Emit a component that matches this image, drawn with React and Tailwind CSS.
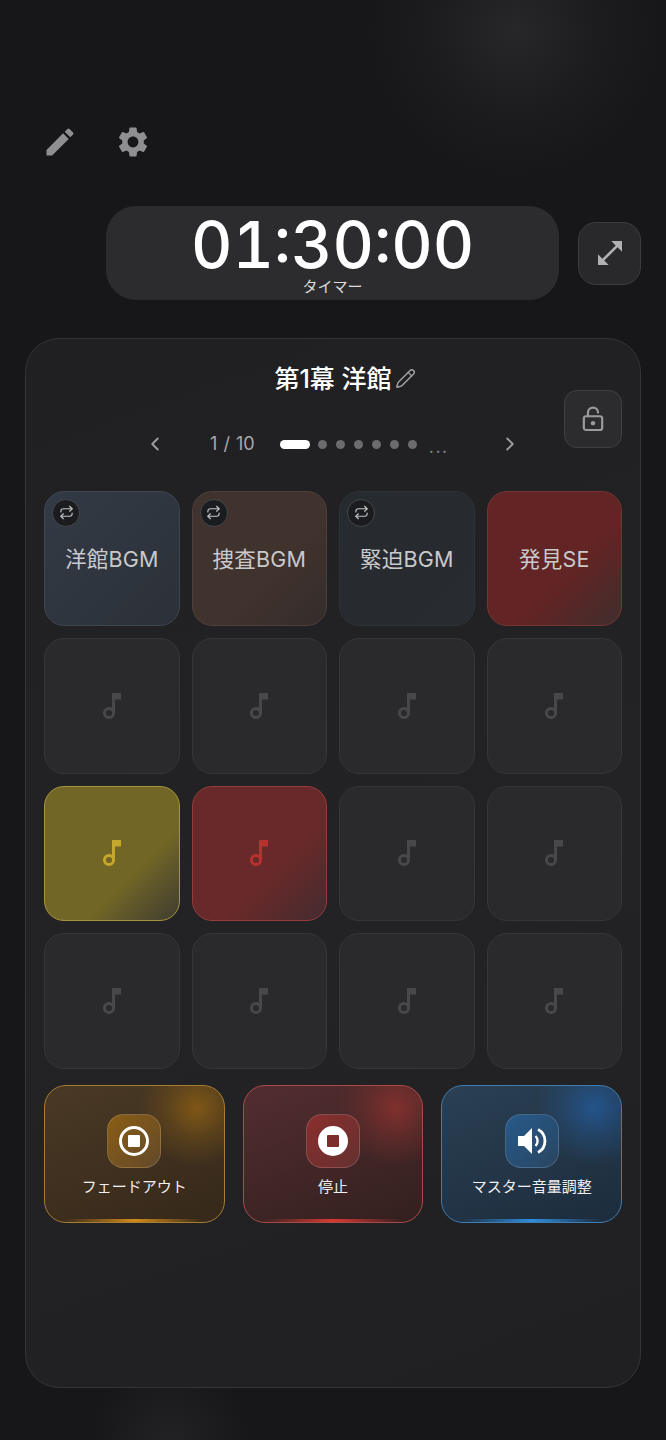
import { ChevronLeft, ChevronRight, Pencil, Repeat } from 'lucide-react'
import { MdEdit, MdOpenInFull, MdSettings } from 'react-icons/md'

const FONT = "font-['Inter','Noto_Sans_CJK_JP',sans-serif]"

const tiles = [
  { label: '洋館BGM', loop: true, box: 'border-[#40464f] bg-[linear-gradient(135deg,#323a45,#2c3138)]' },
  { label: '捜査BGM', loop: true, box: 'border-[#4e3f3b] bg-[linear-gradient(135deg,#40322d_60%,#342d2b)]' },
  { label: '緊迫BGM', loop: true, box: 'border-[#2d3237] bg-[linear-gradient(135deg,#262b30,#282b2f)]' },
  { label: '発見SE', box: 'border-[#773434] bg-[linear-gradient(135deg,#622424_62%,#3f2e2e)]' },
  {}, {}, {}, {},
  { box: 'border-[#a3953f] bg-[linear-gradient(135deg,#726626_65%,#3f3c30_100%)]', note: 'text-[#c4a72d]' },
  { box: 'border-[#963c3c] bg-[linear-gradient(135deg,#672929_65%,#432c30_100%)]', note: 'text-[#b9302f]' },
  {}, {},
  {}, {}, {}, {},
]

function NoteIcon({ className }) {
  return (
    <svg width="20" height="28" viewBox="0 0 20 28" className={className}>
      <circle cx="7" cy="21" r="4.6" fill="none" stroke="currentColor" strokeWidth="3" />
      <path d="M10 21V1h9v6.5h-6V21z" fill="currentColor" />
    </svg>
  )
}

function LockIcon() {
  return (
    <svg width="22" height="26" viewBox="0 0 24 28" fill="none" stroke="#9a9a9c" strokeWidth="2.4">
      <rect x="2" y="11" width="20" height="15" rx="2.5" />
      <path d="M6.5 11V7a5.5 5.5 0 0 1 11 0" strokeLinecap="round" />
      <circle cx="12" cy="18.5" r="2.4" fill="#9a9a9c" stroke="none" />
    </svg>
  )
}

function FadeIcon() {
  return (
    <svg width="32" height="32" viewBox="0 0 32 32">
      <circle cx="16" cy="16" r="13.5" fill="none" stroke="white" strokeWidth="3" />
      <rect x="10" y="10" width="12" height="12" rx="1" fill="white" />
    </svg>
  )
}

function StopIcon() {
  return (
    <svg width="32" height="32" viewBox="0 0 32 32">
      <circle cx="16" cy="16" r="15" fill="white" />
      <rect x="10" y="10" width="12" height="12" rx="1" fill="#7c2c2b" />
    </svg>
  )
}

function VolumeIcon() {
  return (
    <svg width="30" height="28" viewBox="0 0 30 28">
      <path d="M1 9h6l8-8v26l-8-8H1z" fill="white" />
      <path d="M18.5 9a7 7 0 0 1 0 10" fill="none" stroke="white" strokeWidth="2.4" />
      <path d="M21 2.5a13 13 0 0 1 0 23" fill="none" stroke="white" strokeWidth="2.8" />
    </svg>
  )
}

function Tile({ label, loop, box, note }) {
  return (
    <div className={`relative flex aspect-square items-center justify-center rounded-[20px] border ${box || 'border-[#363638] bg-[#2a2a2c]'}`}>
      {loop && (
        <span className="absolute left-[7px] top-[7px] flex h-[28px] w-[28px] items-center justify-center rounded-full border border-[#44464a] bg-[#1b1c1f] text-[#c4c4c6]">
          <Repeat size={15} strokeWidth={1.8} />
        </span>
      )}
      {label ? (
        <span className="mt-[3px] text-[21.5px] leading-none tracking-[0.2px] text-[#c9c9cb]">{label}</span>
      ) : (
        <NoteIcon className={note || 'text-[#48484a]'} />
      )}
    </div>
  )
}

function ActionButton({ label, icon, box, iconBox, line }) {
  return (
    <div className={`relative flex h-[138px] flex-col items-center overflow-hidden rounded-[22px] border-[1.5px] pt-[28px] ${box}`}>
      <div className={`flex h-[54px] w-[54px] items-center justify-center rounded-[16px] border border-white/15 ${iconBox}`}>
        {icon}
      </div>
      <span className="mt-[9px] text-[15px] leading-[20px] text-[#f0f0f0]">{label}</span>
      <div className={`absolute inset-x-[20px] bottom-0 h-[2.5px] ${line}`} />
    </div>
  )
}

export default function App() {
  return (
    <div className={`${FONT} min-h-[1440px] bg-[radial-gradient(circle_at_515px_30px,#272729_0px,#1c1c1f_85px,transparent_150px),radial-gradient(circle_at_170px_1440px,#222224_0px,transparent_80px)] bg-[#17171a] px-[25px] pb-[52px] pt-[124px]`}>
      {/* Top icons */}
      <div className="flex gap-[37px] pl-[17px] text-[#8f8f91]">
        <MdEdit size={36} />
        <MdSettings size={36} />
      </div>

      {/* Timer */}
      <div className="-mx-[25px] mt-[46px] grid grid-cols-[106px_453px_1fr] items-center">
        <div />
        <div className="flex h-[94px] flex-col items-center rounded-[30px] bg-[#2c2c2e] pt-[6px] text-white">
          <span className="text-[64px] font-[450] leading-[66px] tabular-nums">01:30:00</span>
          <span className="mt-[1px] text-[15px] leading-[16px] text-[#dcdcdc]">タイマー</span>
        </div>
        <div className="pl-[19px]">
          <button className="flex h-[63px] w-[63px] items-center justify-center rounded-[18px] border border-[#3c3c3e] bg-[#29292b] text-[#b0b0b2]">
            <MdOpenInFull size={32} />
          </button>
        </div>
      </div>

      {/* Scene panel */}
      <div className="relative mt-[38px] h-[1050px] rounded-[34px] border border-[#343436] bg-[linear-gradient(160deg,#202022,#232325_55%,#202022)] px-[18px] pt-[23px]">
        <div className="flex h-[34px] items-center justify-center text-white">
          <span className="relative text-[25px] font-medium leading-none">
            第1幕 洋館
            <Pencil size={21} strokeWidth={1.6} className="absolute left-full top-[1px] ml-[3px] text-[#a4a4a6]" />
          </span>
        </div>

        <button className="absolute right-[18px] top-[51px] flex h-[58px] w-[58px] items-center justify-center rounded-[13px] border border-[#404042] bg-[#2c2c2e]">
          <LockIcon />
        </button>

        {/* Pagination */}
        <div className="mt-[36px] flex h-[24px] items-center pl-[100px] text-[#a8a8aa]">
          <ChevronLeft size={22} strokeWidth={2} className="text-[#a0a0a2]" />
          <span className="ml-[44px] w-[70px] text-[18px] leading-none [word-spacing:1px]">1 / 10</span>
          <span className="h-[9px] w-[30px] rounded-full bg-white" />
          <div className="ml-[8px] flex gap-[9px]">
            {[0, 1, 2, 3, 4, 5].map((dot) => (
              <span key={dot} className="h-[9px] w-[9px] rounded-full bg-[#6c6c6e]" />
            ))}
          </div>
          <span className="ml-[12px] mt-[7px] w-[18px] text-[14px] font-bold leading-none tracking-[2px] text-[#858587]">...</span>
          <ChevronRight size={22} strokeWidth={2} className="ml-[52px] text-[#a0a0a2]" />
        </div>

        {/* Sound pads */}
        <div className="mt-[34.5px] grid grid-cols-4 gap-x-[12px] gap-y-[12px]">
          {tiles.map((tile, i) => (
            <Tile key={i} {...tile} />
          ))}
        </div>

        {/* Actions */}
        <div className="mt-[16px] grid grid-cols-3 gap-[18px]">
          <ActionButton
            label="フェードアウト"
            icon={<FadeIcon />}
            box="border-[#a67c30] bg-[radial-gradient(circle_at_152px_22px,#7f5716_0px,#7f571666_30px,transparent_58px),linear-gradient(160deg,#493925,#36281a)]"
            iconBox="bg-[linear-gradient(135deg,#8a5d14,#63492a)]"
            line="bg-[linear-gradient(90deg,transparent,#d18a1a,transparent)]"
          />
          <ActionButton
            label="停止"
            icon={<StopIcon />}
            box="border-[#a84a48] bg-[radial-gradient(circle_at_152px_22px,#80302c_0px,#80302c66_30px,transparent_58px),linear-gradient(160deg,#532d30,#33201f)]"
            iconBox="bg-[linear-gradient(135deg,#8a2f2d,#64302f)]"
            line="bg-[linear-gradient(90deg,transparent,#d93a32,transparent)]"
          />
          <ActionButton
            label="マスター音量調整"
            icon={<VolumeIcon />}
            box="border-[#3f7cb0] bg-[radial-gradient(circle_at_152px_22px,#23548a_0px,#23548a66_30px,transparent_58px),linear-gradient(160deg,#2b4054,#1c2c3c)]"
            iconBox="bg-[linear-gradient(135deg,#265a8c,#2a4560)]"
            line="bg-[linear-gradient(90deg,transparent,#2f8ee0,transparent)]"
          />
        </div>
      </div>
    </div>
  )
}
